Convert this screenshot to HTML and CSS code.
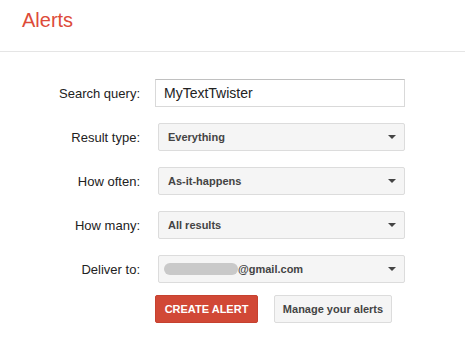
FILE: index.html
```html
<!DOCTYPE html>
<html lang="en">
<head>
    <meta charset="UTF-8">
    <title>Alerts</title>
    <link rel="stylesheet" href="styles.css">
</head>
<body>
    <header class="top-bar">
        <h1>Alerts</h1>
    </header>
    <main class="alert-form">
        <div class="form-row first">
            <label class="form-label">Search query:</label>
            <input class="text-input" type="text" value="MyTextTwister">
        </div>
        <div class="form-row">
            <label class="form-label">Result type:</label>
            <div class="select-box"><span>Everything</span><i class="caret"></i></div>
        </div>
        <div class="form-row">
            <label class="form-label">How often:</label>
            <div class="select-box"><span>As-it-happens</span><i class="caret"></i></div>
        </div>
        <div class="form-row">
            <label class="form-label">How many:</label>
            <div class="select-box"><span>All results</span><i class="caret"></i></div>
        </div>
        <div class="form-row">
            <label class="form-label">Deliver to:</label>
            <div class="select-box"><span><b class="hidden-name"></b>@gmail.com</span><i class="caret"></i></div>
        </div>
        <div class="form-row buttons">
            <span class="form-label"></span>
            <button class="btn btn-red">CREATE ALERT</button>
            <button class="btn btn-grey">Manage your alerts</button>
        </div>
    </main>
</body>
</html>
```

FILE: styles.css
```css
body {
    margin: 0;
    font-family: Arial, "Liberation Sans", sans-serif;
    background-color: #fff;
    color: #222;
}
.top-bar {
    height: 52px;
    border-bottom: 1px solid #e5e5e5;
    box-sizing: border-box;
    padding: 9px 0 0 22px;
}
.top-bar h1 {
    margin: 0;
    font-size: 20px;
    font-weight: normal;
    color: #dd4b39;
}
.alert-form {
    display: flex;
    flex-direction: column;
}
.form-row {
    display: flex;
    align-items: center;
    height: 28px;
    margin-top: 16px;
}
.form-row.first {
    margin-top: 27px;
}
.form-row.buttons {
    margin-top: 12px;
}
.form-label {
    width: 140px;
    margin-right: 15px;
    text-align: right;
    font-size: 13px;
    color: #222;
}
.text-input {
    width: 250px;
    height: 28px;
    box-sizing: border-box;
    border: 1px solid #d9d9d9;
    border-top-color: #c0c0c0;
    padding: 0 8px;
    font-family: Arial, "Liberation Sans", sans-serif;
    font-size: 14px;
    color: #222;
    outline: none;
}
.select-box {
    width: 247px;
    height: 28px;
    margin-left: 3px;
    box-sizing: border-box;
    border: 1px solid #dcdcdc;
    border-radius: 2px;
    background-color: #f5f5f5;
    display: flex;
    align-items: center;
    justify-content: space-between;
    padding: 0 8px 0 9px;
    font-size: 11px;
    font-weight: bold;
    color: #444;
}
.select-box span {
    display: flex;
    align-items: center;
}
.hidden-name {
    display: inline-block;
    width: 74px;
    height: 12px;
    border-radius: 6px;
    background-color: #c9c9c9;
    margin-left: -4px;
}
.caret {
    width: 0;
    height: 0;
    border-left: 4px solid transparent;
    border-right: 4px solid transparent;
    border-top: 4px solid #444;
}
.btn {
    height: 28px;
    box-sizing: border-box;
    border-radius: 2px;
    font-family: Arial, "Liberation Sans", sans-serif;
    font-size: 11px;
    font-weight: bold;
    cursor: pointer;
}
.btn-red {
    width: 103px;
    background-color: #d14836;
    border: 1px solid #c6412f;
    color: #fff;
}
.btn-grey {
    width: 118px;
    margin-left: 16px;
    background-color: #f5f5f5;
    border: 1px solid #dcdcdc;
    color: #444;
}
```
